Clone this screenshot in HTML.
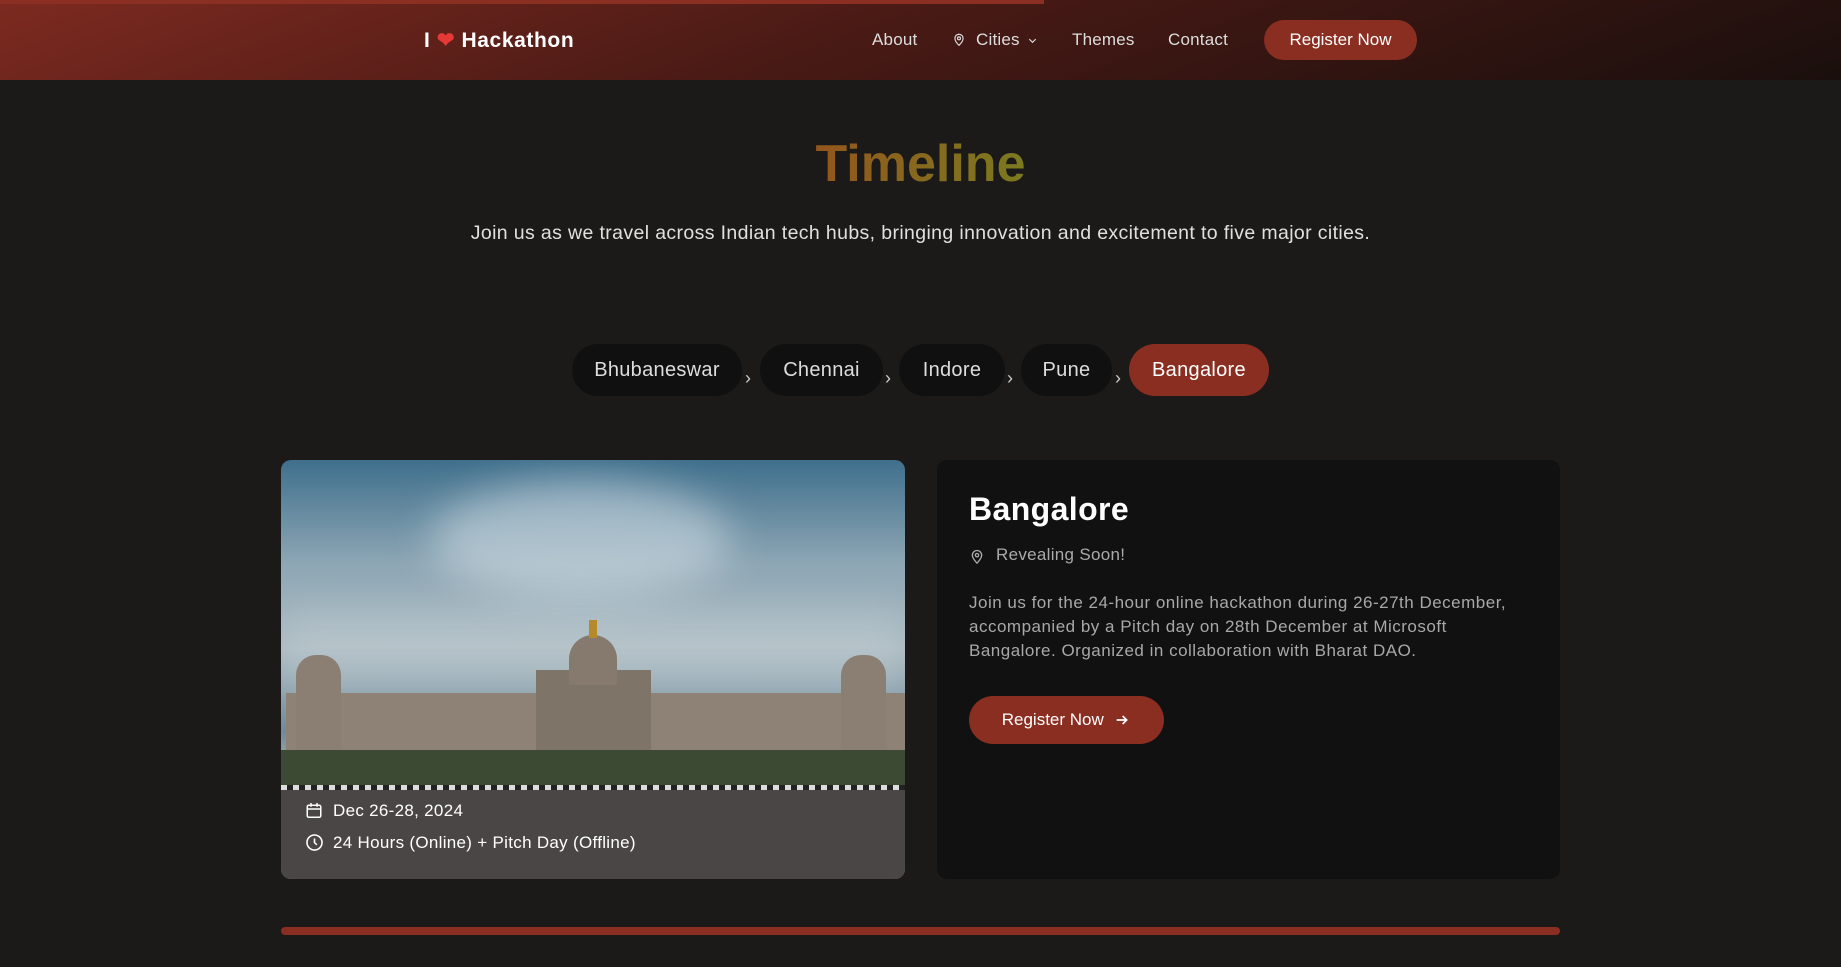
<!DOCTYPE html>
<html><head><meta charset="utf-8"><style>
*{margin:0;padding:0;box-sizing:border-box}
body{width:1841px;height:967px;background:#1b1a19;font-family:"Liberation Sans",sans-serif;position:relative;overflow:hidden;color:#eee}
.abs{position:absolute}
nav{position:absolute;left:0;top:0;width:1841px;height:80px;background:linear-gradient(160deg,#7d2a20 0%,#4a1a15 45%,#1a0f0d 100%)}
.prog{position:absolute;left:0;top:0;width:1044px;height:4px;background:#8c2f23}
.logo{left:424px;top:28px;font-size:21px;font-weight:bold;color:#fff;letter-spacing:0.6px}
.nl{top:30px;font-size:17px;color:#ddd;letter-spacing:0.2px}
.btn{background:#8a2e22;color:#fff;border-radius:24px;display:flex;align-items:center;justify-content:center}
.pill{position:absolute;top:344px;height:52px;border-radius:26px;background:#101010;color:#ddd;font-size:20px;display:flex;align-items:center;justify-content:center;letter-spacing:0.3px}
.chev{position:absolute;top:368px;color:#ccc;font-size:18px}
</style></head><body>
<nav><div class="prog"></div>
<div class="abs logo">I <span style="color:#e53935">❤</span> Hackathon</div>
<div class="abs nl" style="left:872px">About</div>
<svg class="abs" style="left:952px;top:31px" width="14" height="17" viewBox="0 0 24 24" fill="none" stroke="#ddd" stroke-width="2"><path d="M12 22s-7-7-7-12a7 7 0 0 1 14 0c0 5-7 12-7 12z"/><circle cx="12" cy="10" r="2.5"/></svg>
<div class="abs nl" style="left:976px">Cities</div>
<svg class="abs" style="left:1027px;top:35px" width="11" height="11" viewBox="0 0 24 24" fill="none" stroke="#ddd" stroke-width="2.5"><path d="M5 9l7 7 7-7"/></svg>
<div class="abs nl" style="left:1072px">Themes</div>
<div class="abs nl" style="left:1168px">Contact</div>
<div class="abs btn" style="left:1264px;top:20px;width:153px;height:40px;font-size:17px">Register Now</div>
</nav>
<div class="abs" style="left:0;width:1841px;top:134px;text-align:center;font-size:52px;font-weight:bold"><span style="background:linear-gradient(90deg,#93561c,#7b7a1f);-webkit-background-clip:text;color:transparent">Timeline</span></div>
<div class="abs" style="left:0;width:1841px;top:222px;text-align:center;font-size:19.5px;color:#e0e0e0;letter-spacing:0.37px">Join us as we travel across Indian tech hubs, bringing innovation and excitement to five major cities.</div>
<div class="pill" style="left:572px;width:170px">Bhubaneswar</div>
<div class="chev" style="left:745px">›</div>
<div class="pill" style="left:760px;width:123px">Chennai</div>
<div class="chev" style="left:885px">›</div>
<div class="pill" style="left:899px;width:106px">Indore</div>
<div class="chev" style="left:1007px">›</div>
<div class="pill" style="left:1021px;width:91px">Pune</div>
<div class="chev" style="left:1115px">›</div>
<div class="pill" style="left:1129px;width:140px;background:#8a2e22;color:#fff">Bangalore</div>

<div class="abs" style="left:281px;top:460px;width:624px;height:419px;border-radius:10px;overflow:hidden;background:linear-gradient(180deg,#3f6f8c 0%,#8ea7b5 25%,#a9b9c0 45%,#6f8b9a 65%,#8ea0a6 70%)">
<div class="abs" style="left:150px;top:20px;width:300px;height:120px;border-radius:50%;background:rgba(220,230,235,.5);filter:blur(20px)"></div>
<div class="abs" style="left:0;top:150px;width:624px;height:80px;background:rgba(200,210,215,.4);filter:blur(18px)"></div>
<div class="abs" style="left:5px;top:233px;width:619px;height:60px;background:#8d8275"></div>
<div class="abs" style="left:15px;top:195px;width:45px;height:98px;background:#8a7f72;border-radius:20px 20px 0 0"></div>
<div class="abs" style="left:560px;top:195px;width:45px;height:98px;background:#8a7f72;border-radius:20px 20px 0 0"></div>
<div class="abs" style="left:255px;top:210px;width:115px;height:83px;background:#7f7468"></div>
<div class="abs" style="left:288px;top:175px;width:48px;height:50px;background:#857a6d;border-radius:24px 24px 0 0"></div>
<div class="abs" style="left:308px;top:160px;width:8px;height:18px;background:#b58a2a"></div>
<div class="abs" style="left:0;top:290px;width:624px;height:35px;background:#3d4a33"></div>
<div class="abs" style="left:0;top:325px;width:624px;height:5px;background:repeating-linear-gradient(90deg,#ddd 0 6px,#222 6px 12px)"></div>
<div class="abs" style="left:0;top:330px;width:624px;height:90px;background:#4a4646"></div>
<svg class="abs" style="left:24px;top:341px" width="18" height="19" viewBox="0 0 24 24" fill="none" stroke="#fff" stroke-width="2"><rect x="3" y="5" width="18" height="16" rx="2"/><path d="M3 10h18M8 2v5M16 2v5"/></svg>
<div class="abs" style="left:52px;top:341px;font-size:17px;color:#fff;letter-spacing:0.3px">Dec 26-28, 2024</div>
<svg class="abs" style="left:24px;top:373px" width="19" height="19" viewBox="0 0 24 24" fill="none" stroke="#fff" stroke-width="2"><circle cx="12" cy="12" r="9.5"/><path d="M12 7v5l3 3"/></svg>
<div class="abs" style="left:52px;top:373px;font-size:17px;color:#fff;letter-spacing:0.3px">24 Hours (Online) + Pitch Day (Offline)</div>
</div>

<div class="abs" style="left:937px;top:460px;width:623px;height:419px;border-radius:10px;background:#111">
<div class="abs" style="left:32px;top:31px;font-size:32px;font-weight:bold;color:#fff;letter-spacing:0.4px">Bangalore</div>
<svg class="abs" style="left:32px;top:87px" width="16" height="19" viewBox="0 0 24 24" fill="none" stroke="#aaa" stroke-width="2"><path d="M12 22s-7-7-7-12a7 7 0 0 1 14 0c0 5-7 12-7 12z"/><circle cx="12" cy="10" r="2.5"/></svg>
<div class="abs" style="left:59px;top:85px;font-size:17px;color:#aaa;letter-spacing:0.3px">Revealing Soon!</div>
<div class="abs" style="left:32px;top:131px;width:560px;font-size:17px;line-height:24px;color:#a8a8a8;letter-spacing:0.5px">Join us for the 24-hour online hackathon during 26-27th December, accompanied by a Pitch day on 28th December at Microsoft Bangalore. Organized in collaboration with Bharat DAO.</div>
<div class="abs btn" style="left:32px;top:236px;width:195px;height:48px;font-size:17px">Register Now&nbsp;&nbsp;<svg width="18" height="16" viewBox="0 0 24 24" fill="none" stroke="#fff" stroke-width="2.5"><path d="M4 12h15M13 6l6 6-6 6"/></svg></div>
</div>
<div class="abs" style="left:281px;top:927px;width:1279px;height:8px;border-radius:4px;background:#8a2e22"></div>
</body></html>
